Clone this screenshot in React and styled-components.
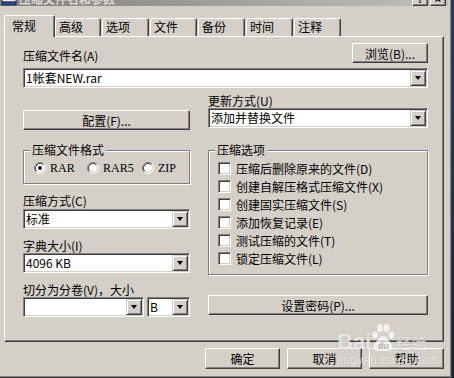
import React from "react";
import styled, { createGlobalStyle, css } from "styled-components";

const face = "#d4d0c8";
const ui = `"SimSun", "Noto Sans CJK SC", "Liberation Sans", sans-serif`;

const GlobalStyle = createGlobalStyle`
  html, body {
    margin: 0;
    padding: 0;
  }
  body {
    background: #16305a;
    font-family: ${ui};
    font-size: 12px;
    color: #000;
  }
`;

const raised = css`
  border: 1px solid;
  border-color: #fff #404040 #404040 #fff;
  box-shadow: inset -1px -1px #808080;
`;

const sunken = css`
  border: 1px solid;
  border-color: #808080 #fff #fff #808080;
  box-shadow: inset 1px 1px #404040, inset -1px -1px ${face};
`;

const Screen = styled.div`
  width: 454px;
  height: 378px;
  display: flex;
  overflow: hidden;
  background: linear-gradient(#1d3f6e, #0c2040);
`;

const Window = styled.div`
  position: relative;
  width: 452px;
  height: 378px;
  flex-shrink: 0;
  box-sizing: border-box;
  background: ${face};
  box-shadow: inset -1px -1px #404040, inset -2px -2px #808080;
  display: flex;
  flex-direction: column;
`;

const TitleBar = styled.div`
  height: 6px;
  width: 448px;
  overflow: hidden;
  display: flex;
  align-items: flex-end;
  background: linear-gradient(to right, #808080, #c0c0c0);
`;

const TitleText = styled.div`
  flex: 1;
  margin-left: 2px;
  font-weight: bold;
  line-height: 14px;
  color: #dcd8d0;
  white-space: nowrap;
`;

const CaptionButton = styled.div`
  width: 16px;
  height: 14px;
  box-sizing: border-box;
  margin-right: ${(p) => p.$mr}px;
  background: ${face};
  ${raised};
  font: bold 11px "Liberation Sans", sans-serif;
  line-height: 12px;
  text-align: center;
`;

const Body = styled.div`
  padding: 9px 8px 0 4px;
  display: flex;
  flex-direction: column;
`;

const TabStrip = styled.div`
  display: flex;
  align-items: flex-end;
  height: 21px;
`;

const Tab = styled.div`
  position: relative;
  z-index: ${(p) => (p.$active ? 1 : 0)};
  box-sizing: border-box;
  width: ${(p) => p.$w}px;
  height: ${(p) => (p.$active ? 22 : 18)}px;
  margin-left: ${(p) => p.$gap}px;
  margin-bottom: ${(p) => (p.$active ? -1 : 0)}px;
  padding: ${(p) => (p.$active ? "3px 0 0 7px" : "1px 0 0 3px")};
  background: ${face};
  border: 1px solid;
  border-bottom: none;
  border-color: #fff #404040 transparent #fff;
  border-radius: 2px 2px 0 0;
  box-shadow: inset -1px 0 #808080;
  line-height: 14px;
  white-space: nowrap;
`;

const Panel = styled.div`
  height: 306px;
  box-sizing: border-box;
  ${raised};
  padding: 6px 15px 0 18px;
  display: flex;
  flex-direction: column;
`;

const TopRow = styled.div`
  display: flex;
  justify-content: space-between;
  align-items: flex-end;
  height: 20px;
`;

const Label = styled.div`
  line-height: 14px;
  height: 14px;
  margin-top: ${(p) => p.$mt || 0}px;
  white-space: nowrap;
`;

const Button = styled.div`
  box-sizing: border-box;
  width: ${(p) => p.$w}px;
  height: ${(p) => p.$h || 20}px;
  margin-top: ${(p) => p.$mt || 0}px;
  background: ${face};
  ${raised};
  display: flex;
  align-items: center;
  justify-content: center;
  white-space: nowrap;
`;

const Combo = styled.div`
  box-sizing: border-box;
  display: flex;
  width: ${(p) => (p.$w ? `${p.$w}px` : "auto")};
  height: 20px;
  margin-top: ${(p) => p.$mt || 0}px;
  background: #fff;
  ${sunken};
`;

const ComboText = styled.div`
  flex: 1;
  min-width: 0;
  padding: 1px 0 0 2px;
  line-height: 16px;
  overflow: hidden;
  white-space: nowrap;
`;

const DropButton = styled.div`
  box-sizing: border-box;
  width: 16px;
  height: 16px;
  margin: 1px;
  background: ${face};
  border: 1px solid;
  border-color: ${face} #404040 #404040 ${face};
  box-shadow: inset 1px 1px #fff, inset -1px -1px #808080;
  display: flex;
  align-items: center;
  justify-content: center;

  &::after {
    content: "";
    border-style: solid;
    border-width: 4px 3.5px 0 3.5px;
    border-color: #000 transparent transparent transparent;
  }
`;

const Columns = styled.div`
  display: grid;
  grid-template-columns: 167px 220px;
  column-gap: 18px;
  margin-top: 6px;
`;

const Column = styled.div`
  display: flex;
  flex-direction: column;
`;

const Group = styled.fieldset`
  margin: ${(p) => p.$mt}px 0 0;
  padding: ${(p) => p.$pad};
  min-width: 0;
  border: 1px solid #808080;
  box-shadow: inset 1px 1px #fff, 1px 1px #fff;
`;

const Legend = styled.legend`
  padding: 0 2px;
  line-height: 14px;
  background: ${face};
`;

const RadioRow = styled.div`
  display: flex;
  margin-left: 4px;
  height: 14px;
  align-items: center;
`;

const RadioOption = styled.div`
  display: flex;
  align-items: center;
  gap: 4px;
  width: ${(p) => (p.$w ? `${p.$w}px` : "auto")};
  font-family: "Liberation Serif", "Noto Sans CJK SC", serif;
  font-size: 12px;
`;

const CheckRow = styled.div`
  display: flex;
  align-items: center;
  gap: 5px;
  height: 18px;
  margin-left: 3px;
  white-space: nowrap;
`;

const CheckBox = styled.div`
  box-sizing: border-box;
  width: 13px;
  height: 13px;
  background: #fff;
  ${sunken};
`;

const SplitRow = styled.div`
  display: flex;
  gap: 3px;
`;

const Footer = styled.div`
  display: flex;
  justify-content: flex-end;
  gap: 7px;
  margin-top: 6px;
`;

const Watermark = styled.div`
  position: absolute;
  left: 337px;
  top: 321px;
  display: flex;
  flex-direction: column;
  color: rgba(255, 255, 255, 0.72);
  text-shadow: 0 0 1px rgba(90, 90, 90, 0.35);
  pointer-events: none;
`;

const MarkTop = styled.div`
  display: flex;
  align-items: flex-end;
  height: 31px;
`;

const MarkBai = styled.span`
  font: bold 22px/18px "Liberation Sans", sans-serif;
  margin-bottom: 1px;
`;

const MarkJy = styled.span`
  font: 15px/16px "Noto Sans CJK SC", sans-serif;
  margin-left: 1px;
  margin-bottom: 1px;
  letter-spacing: 0;
`;

const MarkUrl = styled.div`
  font: 12px/12px "Liberation Sans", sans-serif;
  margin-top: 2px;
  letter-spacing: 0.3px;
`;

const RarIcon = () => (
  <svg width="16" height="16" viewBox="0 0 16 16" style={{ marginLeft: 1, flexShrink: 0 }}>
    <rect x="1" y="1" width="14" height="4" fill="#8a2a8a" stroke="#202020" strokeWidth="0.8" />
    <rect x="1" y="5" width="14" height="4" fill="#2a9a3a" stroke="#202020" strokeWidth="0.8" />
    <rect x="1" y="9" width="14" height="3" fill="#e8e8f0" stroke="#202020" strokeWidth="0.8" />
    <rect x="1" y="12" width="14" height="3" fill="#2848b0" stroke="#202020" strokeWidth="0.8" />
  </svg>
);

const Radio = ({ checked }) => (
  <svg width="12" height="12" viewBox="0 0 12 12">
    <circle cx="6" cy="6" r="4.6" fill="#fff" />
    <path d="M2.11 9.89 A5.5 5.5 0 0 1 9.89 2.11" fill="none" stroke="#808080" />
    <path d="M9.89 2.11 A5.5 5.5 0 0 1 2.11 9.89" fill="none" stroke="#fff" />
    <path d="M2.82 9.18 A4.5 4.5 0 0 1 9.18 2.82" fill="none" stroke="#404040" />
    <path d="M9.18 2.82 A4.5 4.5 0 0 1 2.82 9.18" fill="none" stroke={face} />
    {checked && <circle cx="6" cy="6" r="1.9" fill="#000" />}
  </svg>
);

const Paw = () => (
  <svg width="24" height="31" viewBox="0 0 24 31">
    <g fill="rgba(255,255,255,0.72)">
      <ellipse cx="4" cy="14" rx="2.8" ry="3.6" />
      <ellipse cx="9" cy="7" rx="3" ry="3.9" />
      <ellipse cx="15.5" cy="7" rx="3" ry="3.9" />
      <ellipse cx="20.5" cy="14" rx="2.8" ry="3.6" />
      <path d="M12 15 C8 15 6 20 3.5 23 C1.5 26 3 30 7 30 L17 30 C21 30 22.5 26 20.5 23 C18 20 16 15 12 15 Z" />
    </g>
    <text x="12.3" y="28" textAnchor="middle" fontFamily="Liberation Sans, sans-serif" fontWeight="bold" fontSize="9" fill="rgba(190,186,180,0.9)">du</text>
  </svg>
);

const ComboBox = ({ value, w, mt }) => (
  <Combo $w={w} $mt={mt}>
    <ComboText>{value}</ComboText>
    <DropButton />
  </Combo>
);

const tabs = [
  { label: "常规", w: 51, gap: 0, active: true },
  { label: "高级", w: 46, gap: 0 },
  { label: "选项", w: 47, gap: 1 },
  { label: "文件", w: 47, gap: 1 },
  { label: "备份", w: 47, gap: 1 },
  { label: "时间", w: 47, gap: 1 },
  { label: "注释", w: 47, gap: 1 },
];

const options = [
  "压缩后删除原来的文件(D)",
  "创建自解压格式压缩文件(X)",
  "创建固实压缩文件(S)",
  "添加恢复记录(E)",
  "测试压缩的文件(T)",
  "锁定压缩文件(L)",
];

export default function App() {
  return (
    <>
      <GlobalStyle />
      <Screen>
        <Window>
          <TitleBar>
            <RarIcon />
            <TitleText>压缩文件名和参数</TitleText>
            <CaptionButton $mr={2}>?</CaptionButton>
            <CaptionButton $mr={2}>×</CaptionButton>
          </TitleBar>
          <Body>
            <TabStrip>
              {tabs.map((t) => (
                <Tab key={t.label} $w={t.w} $gap={t.gap} $active={t.active}>
                  {t.label}
                </Tab>
              ))}
            </TabStrip>
            <Panel>
              <TopRow>
                <Label>压缩文件名(A)</Label>
                <Button $w={76}>浏览(B)...</Button>
              </TopRow>
              <ComboBox value="1帐套NEW.rar" mt={5} />
              <Columns>
                <Column>
                  <Button $w={167} $mt={16}>配置(F)...</Button>
                  <Group $mt={13} $pad="4px 6px 8px 6px">
                    <Legend>压缩文件格式</Legend>
                    <RadioRow>
                      <RadioOption $w={53}>
                        <Radio checked />
                        RAR
                      </RadioOption>
                      <RadioOption $w={55}>
                        <Radio />
                        RAR5
                      </RadioOption>
                      <RadioOption>
                        <Radio />
                        ZIP
                      </RadioOption>
                    </RadioRow>
                  </Group>
                  <Label $mt={10}>压缩方式(C)</Label>
                  <ComboBox value="标准" mt={1} />
                  <Label $mt={10}>字典大小(I)</Label>
                  <ComboBox value="4096 KB" mt={0} />
                  <Label $mt={10}>切分为分卷(V)，大小</Label>
                  <SplitRow>
                    <ComboBox value="" w={121} />
                    <ComboBox value="B" w={43} />
                  </SplitRow>
                </Column>
                <Column>
                  <Label>更新方式(U)</Label>
                  <ComboBox value="添加并替换文件" />
                  <Group $mt={15} $pad="2px 6px 7px 6px">
                    <Legend>压缩选项</Legend>
                    {options.map((o) => (
                      <CheckRow key={o}>
                        <CheckBox />
                        {o}
                      </CheckRow>
                    ))}
                  </Group>
                  <Button $w={220} $mt={20}>设置密码(P)...</Button>
                </Column>
              </Columns>
            </Panel>
            <Footer>
              <Button $w={75} $h={21}>确定</Button>
              <Button $w={75} $h={21}>取消</Button>
              <Button $w={75} $h={21}>帮助</Button>
            </Footer>
          </Body>
          <Watermark>
            <MarkTop>
              <MarkBai>Bai</MarkBai>
              <Paw />
              <MarkJy>经验</MarkJy>
            </MarkTop>
            <MarkUrl>jingyan.baidu.com</MarkUrl>
          </Watermark>
        </Window>
      </Screen>
    </>
  );
}
